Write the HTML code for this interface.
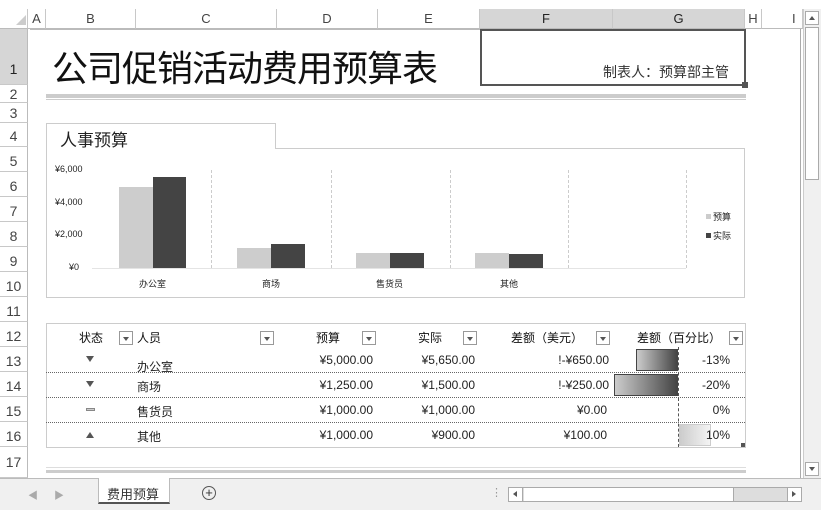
<!DOCTYPE html>
<html><head><meta charset="utf-8"><style>
*{margin:0;padding:0;box-sizing:border-box}
body{width:821px;height:510px;overflow:hidden;background:#fff;font-family:"Liberation Sans","Noto Sans CJK SC",sans-serif;position:relative;color:#222}
.a{position:absolute}
.ch{position:absolute;top:9px;height:20px;border-right:1px solid #c8c8c8;border-bottom:1px solid #bbb;font-size:13px;color:#444;text-align:center;line-height:20px;background:#fff}
.rh{position:absolute;left:0;width:28px;border-bottom:1px solid #c8c8c8;border-right:1px solid #bbb;font-size:14px;color:#444;text-align:center;background:#fff}
.t{position:absolute;font-size:12px;white-space:nowrap}
.h{font-weight:normal;color:#111}
.dd{position:absolute;width:14px;height:14px;border:1px solid #999;background:#fff}
.dd:after{content:"";position:absolute;left:3px;top:5px;border-left:3px solid transparent;border-right:3px solid transparent;border-top:4px solid #555}
.dash{position:absolute;left:46px;width:699px;border-top:1px dotted #666}
</style></head><body>
<div class="ch" style="left:0;width:28px"></div>
<div class="a" style="left:16px;top:15px;border-left:10px solid transparent;border-bottom:10px solid #ccc"></div>
<div class="ch" style="left:28px;width:18px">A</div>
<div class="ch" style="left:46px;width:90px">B</div>
<div class="ch" style="left:136px;width:141px">C</div>
<div class="ch" style="left:277px;width:101px">D</div>
<div class="ch" style="left:378px;width:102px">E</div>
<div class="ch" style="left:480px;width:133px;background:#d6d6d6;color:#222">F</div>
<div class="ch" style="left:613px;width:132px;background:#d6d6d6;color:#222">G</div>
<div class="ch" style="left:745px;width:17px">H</div>
<div class="ch" style="left:762px;width:41px;text-align:left;padding-left:30px">I</div>
<div class="rh" style="top:29px;height:56px;line-height:80px;background:#d6d6d6;color:#222">1</div>
<div class="rh" style="top:85px;height:18px;line-height:18px">2</div>
<div class="rh" style="top:103px;height:20px;line-height:20px">3</div>
<div class="rh" style="top:123px;height:24px;line-height:26px">4</div>
<div class="rh" style="top:147px;height:25px;line-height:28px">5</div>
<div class="rh" style="top:172px;height:25px;line-height:28px">6</div>
<div class="rh" style="top:197px;height:25px;line-height:28px">7</div>
<div class="rh" style="top:222px;height:25px;line-height:28px">8</div>
<div class="rh" style="top:247px;height:25px;line-height:28px">9</div>
<div class="rh" style="top:272px;height:25px;line-height:28px">10</div>
<div class="rh" style="top:297px;height:25px;line-height:28px">11</div>
<div class="rh" style="top:322px;height:25px;line-height:28px">12</div>
<div class="rh" style="top:347px;height:25px;line-height:28px">13</div>
<div class="rh" style="top:372px;height:25px;line-height:28px">14</div>
<div class="rh" style="top:397px;height:25px;line-height:28px">15</div>
<div class="rh" style="top:422px;height:25px;line-height:28px">16</div>
<div class="rh" style="top:447px;height:31px;line-height:30px">17</div>
<div class="a" style="left:800px;top:29px;height:449px;border-left:1px solid #aaa"></div>
<div class="a" style="left:803px;top:9px;width:18px;height:469px;background:#f0f0f0;border-left:1px solid #ccc"></div>
<div class="a" style="left:805px;top:11px;width:14px;height:14px;background:#fff;border:1px solid #aaa"></div>
<div class="a" style="left:809px;top:16px;border-left:3px solid transparent;border-right:3px solid transparent;border-bottom:4px solid #555"></div>
<div class="a" style="left:805px;top:27px;width:14px;height:153px;background:#fff;border:1px solid #aaa"></div>
<div class="a" style="left:805px;top:462px;width:14px;height:14px;background:#fff;border:1px solid #aaa"></div>
<div class="a" style="left:809px;top:467px;border-left:3px solid transparent;border-right:3px solid transparent;border-top:4px solid #555"></div>
<div class="a" style="left:30px;top:29px;width:450px;height:56px;border-top:1px solid #bbb"></div>
<div class="t" style="left:52px;top:40px;font-size:36px;color:#111;letter-spacing:-1px">公司促销活动费用预算表</div>
<div class="a" style="left:480px;top:29px;width:266px;height:57px;border:2px solid #555"></div>
<div class="a" style="left:742px;top:82px;width:6px;height:6px;background:#555"></div>
<div class="t" style="left:603px;top:62px;font-size:14px;color:#333">制表人：预算部主管</div>
<div class="a" style="left:46px;top:94px;width:700px;height:4px;background:#ccc"></div>
<div class="a" style="left:46px;top:99px;width:700px;height:1px;background:#ccc"></div>
<div class="a" style="left:46px;top:148px;width:699px;height:150px;border:1px solid #ccc"></div>
<div class="a" style="left:46px;top:123px;width:230px;height:26px;border:1px solid #ccc;border-bottom:none;background:#fff"></div>
<div class="t" style="left:60px;top:126px;font-size:17px;color:#222">人事预算</div>
<div class="t" style="left:55px;top:164px;font-size:9px">¥6,000</div>
<div class="t" style="left:55px;top:197px;font-size:9px">¥4,000</div>
<div class="t" style="left:55px;top:229px;font-size:9px">¥2,000</div>
<div class="t" style="left:69px;top:262px;font-size:9px">¥0</div>
<div class="a" style="left:92px;top:268px;width:594px;border-top:1px solid #e4e4e4"></div>
<div class="a" style="left:211px;top:170px;height:98px;border-left:1px dashed #ccc"></div>
<div class="a" style="left:331px;top:170px;height:98px;border-left:1px dashed #ccc"></div>
<div class="a" style="left:450px;top:170px;height:98px;border-left:1px dashed #ccc"></div>
<div class="a" style="left:568px;top:170px;height:98px;border-left:1px dashed #ccc"></div>
<div class="a" style="left:686px;top:170px;height:98px;border-left:1px dashed #ccc"></div>
<div class="a" style="left:119px;top:187px;width:34px;height:81px;background:#cdcdcd"></div>
<div class="a" style="left:153px;top:177px;width:33px;height:91px;background:#444"></div>
<div class="a" style="left:237px;top:248px;width:34px;height:20px;background:#cdcdcd"></div>
<div class="a" style="left:271px;top:244px;width:34px;height:24px;background:#444"></div>
<div class="a" style="left:356px;top:253px;width:34px;height:15px;background:#cdcdcd"></div>
<div class="a" style="left:390px;top:253px;width:34px;height:15px;background:#444"></div>
<div class="a" style="left:475px;top:253px;width:34px;height:15px;background:#cdcdcd"></div>
<div class="a" style="left:509px;top:254px;width:34px;height:14px;background:#444"></div>
<div class="t" style="left:139px;top:277px;font-size:9px">办公室</div>
<div class="t" style="left:262px;top:277px;font-size:9px">商场</div>
<div class="t" style="left:376px;top:277px;font-size:9px">售货员</div>
<div class="t" style="left:500px;top:277px;font-size:9px">其他</div>
<div class="a" style="left:706px;top:214px;width:5px;height:5px;background:#ccc"></div>
<div class="t" style="left:713px;top:210px;font-size:9px">预算</div>
<div class="a" style="left:706px;top:233px;width:5px;height:5px;background:#444"></div>
<div class="t" style="left:713px;top:229px;font-size:9px">实际</div>
<div class="a" style="left:46px;top:323px;width:700px;height:125px;border:1px solid #ccc"></div>
<div class="t h" style="left:79px;top:329px">状态</div>
<div class="dd" style="left:119px;top:331px"></div>
<div class="t h" style="left:137px;top:329px">人员</div>
<div class="dd" style="left:260px;top:331px"></div>
<div class="t h" style="left:316px;top:329px">预算</div>
<div class="dd" style="left:362px;top:331px"></div>
<div class="t h" style="left:418px;top:329px">实际</div>
<div class="dd" style="left:463px;top:331px"></div>
<div class="t h" style="left:511px;top:329px">差额（美元）</div>
<div class="dd" style="left:596px;top:331px"></div>
<div class="t h" style="left:637px;top:329px">差额（百分比）</div>
<div class="dd" style="left:729px;top:331px"></div>
<div class="dash" style="top:372px"></div>
<div class="dash" style="top:397px"></div>
<div class="dash" style="top:422px"></div>
<div class="a" style="left:678px;top:347px;height:100px;border-left:1px dashed #555"></div>
<div class="a" style="left:636px;top:349px;width:42px;height:22px;background:linear-gradient(90deg,#ccc,#444);border:1px solid #444"></div>
<div class="a" style="left:614px;top:374px;width:64px;height:22px;background:linear-gradient(90deg,#ccc,#444);border:1px solid #444"></div>
<div class="a" style="left:679px;top:424px;width:32px;height:22px;background:linear-gradient(90deg,#ccc,#f4f4f4);border:1px solid #ccc"></div>
<div class="a" style="left:741px;top:443px;width:4px;height:4px;background:#555"></div>
<div class="a" style="left:86px;top:356px;border-left:4px solid transparent;border-right:4px solid transparent;border-top:6px solid #555"></div>
<div class="a" style="left:86px;top:381px;border-left:4px solid transparent;border-right:4px solid transparent;border-top:6px solid #555"></div>
<div class="a" style="left:86px;top:408px;width:9px;height:3px;border:1px solid #888;background:#ccc"></div>
<div class="a" style="left:86px;top:432px;border-left:4px solid transparent;border-right:4px solid transparent;border-bottom:6px solid #555"></div>
<div class="t" style="left:137px;top:358px">办公室</div>
<div class="t" style="left:137px;top:378px">商场</div>
<div class="t" style="left:137px;top:403px">售货员</div>
<div class="t" style="left:137px;top:428px">其他</div>
<div class="t" style="right:448px;top:353px">¥5,000.00</div>
<div class="t" style="right:448px;top:378px">¥1,250.00</div>
<div class="t" style="right:448px;top:403px">¥1,000.00</div>
<div class="t" style="right:448px;top:428px">¥1,000.00</div>
<div class="t" style="right:346px;top:353px">¥5,650.00</div>
<div class="t" style="right:346px;top:378px">¥1,500.00</div>
<div class="t" style="right:346px;top:403px">¥1,000.00</div>
<div class="t" style="right:346px;top:428px">¥900.00</div>
<div class="t" style="right:212px;top:353px">!-¥650.00</div>
<div class="t" style="right:212px;top:378px">!-¥250.00</div>
<div class="t" style="right:214px;top:403px">¥0.00</div>
<div class="t" style="right:214px;top:428px">¥100.00</div>
<div class="t" style="right:91px;top:353px">-13%</div>
<div class="t" style="right:91px;top:378px">-20%</div>
<div class="t" style="right:91px;top:403px">0%</div>
<div class="t" style="right:91px;top:428px">10%</div>
<div class="a" style="left:46px;top:470px;width:700px;height:3px;background:#ccc"></div>
<div class="a" style="left:46px;top:467px;width:700px;height:1px;background:#ddd"></div>
<div class="a" style="left:0;top:478px;width:821px;height:32px;background:#f0f0f0;border-top:1px solid #bbb"></div>
<div class="t" style="left:28px;top:487px;color:#aaa;font-size:10px">◀</div>
<div class="t" style="left:54px;top:487px;color:#aaa;font-size:10px">▶</div>
<div class="a" style="left:98px;top:478px;width:72px;height:26px;background:#fff;border:1px solid #bbb;border-top:none;border-bottom:2px solid #555"></div>
<div class="t" style="left:107px;top:484px;font-size:13px;color:#333">费用预算</div>
<div class="a" style="left:202px;top:486px;width:14px;height:14px;border:1px solid #555;border-radius:50%;text-align:center;line-height:12px;font-size:13px;color:#333">+</div>
<div class="t" style="left:491px;top:486px;color:#999;font-size:11px">⋮</div>
<div class="a" style="left:508px;top:487px;width:294px;height:15px;background:#ddd;border:1px solid #aaa"></div>
<div class="a" style="left:509px;top:488px;width:14px;height:13px;background:#fff;border-right:1px solid #aaa"></div>
<div class="a" style="left:513px;top:491px;border-top:3px solid transparent;border-bottom:3px solid transparent;border-right:4px solid #555"></div>
<div class="a" style="left:524px;top:488px;width:210px;height:13px;background:#fff;border-right:1px solid #aaa"></div>
<div class="a" style="left:787px;top:488px;width:14px;height:13px;background:#fff;border-left:1px solid #aaa"></div>
<div class="a" style="left:792px;top:491px;border-top:3px solid transparent;border-bottom:3px solid transparent;border-left:4px solid #555"></div>
</body></html>
